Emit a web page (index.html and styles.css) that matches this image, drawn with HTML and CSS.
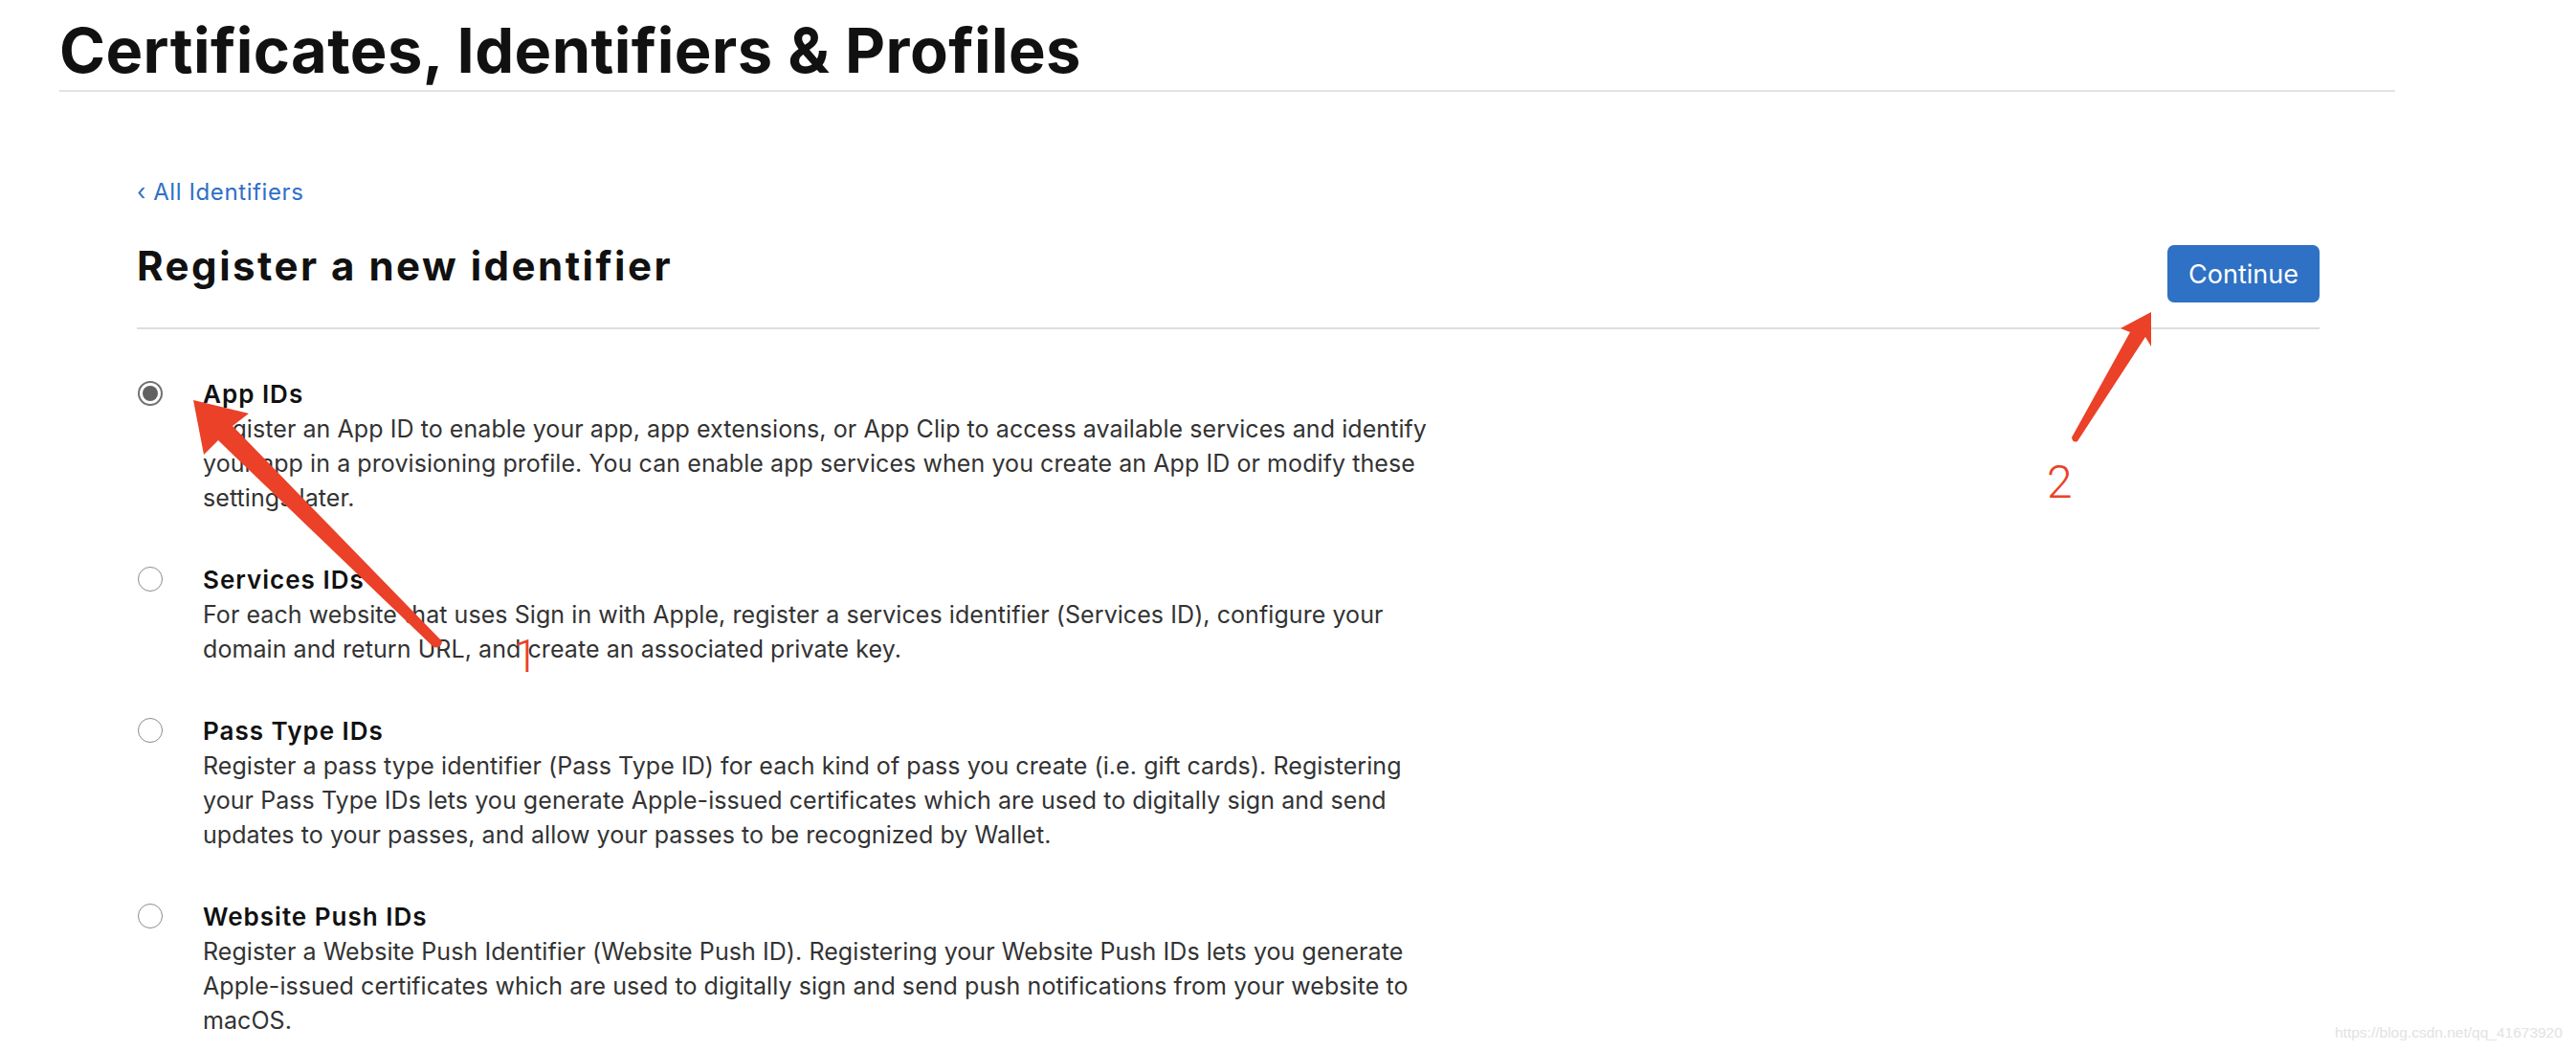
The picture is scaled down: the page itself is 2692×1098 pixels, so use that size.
FILE: index.html
```html
<!DOCTYPE html>
<html lang="en">
<head>
<meta charset="utf-8">
<title>Certificates, Identifiers &amp; Profiles</title>
<link rel="stylesheet" href="styles.css">
</head>
<body>
<div class="page">
  <header class="top">
    <h1 class="title">Certificates, Identifiers &amp; Profiles</h1>
  </header>

  <main class="content">
    <a class="back" href="#">‹ All Identifiers</a>

    <div class="head-row">
      <h2 class="heading">Register a new identifier</h2>
      <button class="btn" type="button">Continue</button>
    </div>

    <ul class="options">
      <li class="option">
        <span class="radio checked"></span>
        <div class="opt-text">
          <div class="opt-title">App IDs</div>
          <p class="opt-desc">Register an App ID to enable your app, app extensions, or App Clip to access available services and identify your app in a provisioning profile. You can enable app services when you create an App ID or modify these settings later.</p>
        </div>
      </li>
      <li class="option">
        <span class="radio"></span>
        <div class="opt-text">
          <div class="opt-title">Services IDs</div>
          <p class="opt-desc">For each website that uses Sign in with Apple, register a services identifier (Services ID), configure your domain and return URL, and create an associated private key.</p>
        </div>
      </li>
      <li class="option">
        <span class="radio"></span>
        <div class="opt-text">
          <div class="opt-title">Pass Type IDs</div>
          <p class="opt-desc">Register a pass type identifier (Pass Type ID) for each kind of pass you create (i.e. gift cards). Registering your Pass Type IDs lets you generate Apple-issued certificates which are used to digitally sign and send updates to your passes, and allow your passes to be recognized by Wallet.</p>
        </div>
      </li>
      <li class="option">
        <span class="radio"></span>
        <div class="opt-text">
          <div class="opt-title">Website Push IDs</div>
          <p class="opt-desc">Register a Website Push Identifier (Website Push ID). Registering your Website Push IDs lets you generate Apple-issued certificates which are used to digitally sign and send push notifications from your website to macOS.</p>
        </div>
      </li>
    </ul>
  </main>

  <svg class="annotations" width="2692" height="1098" viewBox="0 0 2692 1098">
    <path class="arrow" d="M202 418 L260 432 L243 445 L462 670 Q461 678 453 676 L228 460 L213 475 Z"/>
    <text class="mark" x="536" y="702">1</text>
    <path class="arrow" d="M2248 326 L2248 362 L2242 352 L2171 461 Q2166 463 2165 457 L2226 347 L2216 343 Z"/>
    <text class="mark" x="2139" y="520">2</text>
  </svg>

  <div class="watermark">https://blog.csdn.net/qq_41673920</div>
</div>
</body>
</html>
```

FILE: styles.css
```css
* {
  box-sizing: border-box;
}

html, body {
  margin: 0;
  padding: 0;
  background: #ffffff;
  overflow: hidden;
}

body {
  font-family: Inter, "Noto Sans", "Liberation Sans", sans-serif;
  color: #333333;
}

.page {
  position: relative;
  width: 2692px;
  height: 1098px;
}

.top {
  margin-left: 62px;
  width: 2441px;
  padding-top: 13px;
  padding-bottom: 1px;
  border-bottom: 2px solid #e3e3e3;
}

.title {
  margin: 0;
  font-size: 65px;
  line-height: 80px;
  font-weight: 700;
  color: #111111;
  letter-spacing: 0.4px;
}

.content {
  margin-left: 143px;
  width: 2281px;
}

.back {
  display: inline-block;
  margin-top: 90px;
  font-size: 24px;
  line-height: 30px;
  color: #2f6fc7;
  text-decoration: none;
  letter-spacing: 0.6px;
}

.head-row {
  display: flex;
  justify-content: space-between;
  align-items: flex-start;
  margin-top: 37px;
  padding-bottom: 26px;
  border-bottom: 2px solid #dedede;
}

.heading {
  margin: 0;
  font-size: 42px;
  line-height: 50px;
  font-weight: 700;
  color: #111111;
  letter-spacing: 2.5px;
}

.btn {
  margin-top: 3px;
  width: 159px;
  height: 60px;
  border: none;
  border-radius: 7px;
  background: #2e71c5;
  color: #ffffff;
  font-family: Inter, "Noto Sans", sans-serif;
  font-size: 27px;
  font-weight: 400;
  padding: 0;
}

.options {
  list-style: none;
  margin: 50px 0 0 0;
  padding: 0;
  display: flex;
  flex-direction: column;
  gap: 50px;
}

.option {
  display: flex;
  align-items: flex-start;
}

.radio {
  flex: none;
  width: 26px;
  height: 26px;
  margin-top: 4px;
  margin-left: 1px;
  margin-right: 42px;
  border-radius: 50%;
  border: 1.5px solid #8c8c8c;
  background: #ffffff;
  display: flex;
  align-items: center;
  justify-content: center;
}

.radio.checked {
  border: 2px solid #717171;
}

.radio.checked::after {
  content: "";
  width: 16px;
  height: 16px;
  border-radius: 50%;
  background: #616161;
}

.opt-text {
  width: 1300px;
}

.opt-title {
  font-size: 26px;
  line-height: 36px;
  font-weight: 600;
  color: #111111;
  letter-spacing: 1px;
}

.opt-desc {
  margin: 0;
  font-size: 25px;
  line-height: 36px;
  color: #333333;
  letter-spacing: 0.07px;
}

.annotations {
  position: absolute;
  top: 0;
  left: 0;
  pointer-events: none;
}

.arrow {
  fill: #ea4128;
}

.mark {
  fill: #ea4128;
  font-family: Roboto, "Liberation Sans", sans-serif;
  font-weight: 300;
  font-size: 48px;
}

.watermark {
  position: absolute;
  left: 2440px;
  top: 1070px;
  font-family: "Liberation Sans", Arial, sans-serif;
  font-size: 15.5px;
  line-height: 18px;
  color: #e2e2e2;
}
```
